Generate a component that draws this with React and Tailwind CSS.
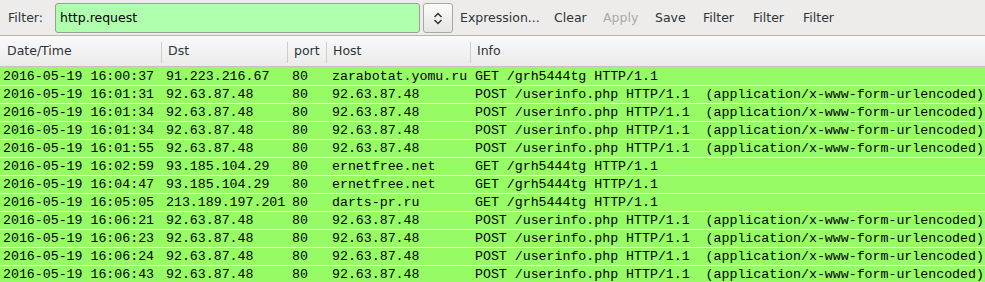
import React from 'react';

const rows = [
  ['2016-05-19 16:00:37', '91.223.216.67', '80', 'zarabotat.yomu.ru', 'GET /grh5444tg HTTP/1.1'],
  ['2016-05-19 16:01:31', '92.63.87.48', '80', '92.63.87.48', 'POST /userinfo.php HTTP/1.1  (application/x-www-form-urlencoded)'],
  ['2016-05-19 16:01:34', '92.63.87.48', '80', '92.63.87.48', 'POST /userinfo.php HTTP/1.1  (application/x-www-form-urlencoded)'],
  ['2016-05-19 16:01:34', '92.63.87.48', '80', '92.63.87.48', 'POST /userinfo.php HTTP/1.1  (application/x-www-form-urlencoded)'],
  ['2016-05-19 16:01:55', '92.63.87.48', '80', '92.63.87.48', 'POST /userinfo.php HTTP/1.1  (application/x-www-form-urlencoded)'],
  ['2016-05-19 16:02:59', '93.185.104.29', '80', 'ernetfree.net', 'GET /grh5444tg HTTP/1.1'],
  ['2016-05-19 16:04:47', '93.185.104.29', '80', 'ernetfree.net', 'GET /grh5444tg HTTP/1.1'],
  ['2016-05-19 16:05:05', '213.189.197.201', '80', 'darts-pr.ru', 'GET /grh5444tg HTTP/1.1'],
  ['2016-05-19 16:06:21', '92.63.87.48', '80', '92.63.87.48', 'POST /userinfo.php HTTP/1.1  (application/x-www-form-urlencoded)'],
  ['2016-05-19 16:06:23', '92.63.87.48', '80', '92.63.87.48', 'POST /userinfo.php HTTP/1.1  (application/x-www-form-urlencoded)'],
  ['2016-05-19 16:06:24', '92.63.87.48', '80', '92.63.87.48', 'POST /userinfo.php HTTP/1.1  (application/x-www-form-urlencoded)'],
  ['2016-05-19 16:06:43', '92.63.87.48', '80', '92.63.87.48', 'POST /userinfo.php HTTP/1.1  (application/x-www-form-urlencoded)'],
];

const cols = 'grid grid-cols-[161px_126px_39px_144px_1fr]';

const ToolButton = ({ label, w, disabled }) => (
  <span className={`${w} shrink-0 ${disabled ? 'text-[#a9a9a6]' : 'text-[#2e3436]'}`}>{label}</span>
);

const HeaderCell = ({ label, first }) => (
  <div className={`flex items-center h-full pl-[7px] ${first ? '' : 'relative'}`}>
    {!first && <span className="absolute left-0 top-[6px] bottom-[3px] w-px bg-[#cfcecb]" />}
    <span>{label}</span>
  </div>
);

export default function App() {
  return (
    <div className="w-[985px] h-[282px] overflow-hidden bg-[#edeceb] font-['DejaVu_Sans',sans-serif] text-[12.5px] text-[#2e3436]">
      {/* Filter toolbar */}
      <div className="flex items-center h-[35px] pl-[8px] pt-[1px]">
        <span className="w-[47px] shrink-0">Filter:</span>
        <div className="w-[365px] h-[30px] flex items-center pl-[4px] bg-[#afffaf] border border-[#9c9c98] rounded-[3px] text-black">
          http.request
        </div>
        <button className="ml-[3px] w-[30px] h-[30px] flex items-center justify-center border border-[#a8a8a4] rounded-[3px] bg-gradient-to-b from-[#fbfbfa] to-[#e6e5e3]">
          <svg width="10" height="13" viewBox="0 0 10 13" fill="none" stroke="#2e3436" strokeWidth="1.5">
            <path d="M1.5 5 L5 1.5 L8.5 5" />
            <path d="M1.5 8 L5 11.5 L8.5 8" />
          </svg>
        </button>
        <div className="flex items-center ml-[7px]">
          <ToolButton label="Expression..." w="w-[94px]" />
          <ToolButton label="Clear" w="w-[49px]" />
          <ToolButton label="Apply" w="w-[52px]" disabled />
          <ToolButton label="Save" w="w-[48px]" />
          <ToolButton label="Filter" w="w-[50px]" />
          <ToolButton label="Filter" w="w-[50px]" />
          <ToolButton label="Filter" w="w-[50px]" />
        </div>
      </div>
      <div className="h-px bg-[#b6b5b1]" />

      {/* Column header */}
      <div className={`${cols} h-[31px] bg-gradient-to-b from-[#fafafa] to-[#ebebea] border-b border-[#c4c3bf]`}>
        <HeaderCell label="Date/Time" first />
        <HeaderCell label="Dst" />
        <HeaderCell label="port" />
        <HeaderCell label="Host" />
        <HeaderCell label="Info" />
      </div>

      {/* Packet rows */}
      <div className="font-['Liberation_Mono',monospace] text-[13.25px] text-black bg-[#97fb66]">
        {rows.map((r, i) => (
          <div
            key={i}
            className={`${cols} h-[18px] items-center leading-[17px] whitespace-pre ${i === 0 ? '' : 'border-t border-[#effde8]'}`}
          >
            <span className="pl-[3px] overflow-hidden">{r[0]}</span>
            <span className="pl-[5px] overflow-hidden">{r[1]}</span>
            <span className="pl-[5px] overflow-hidden">{r[2]}</span>
            <span className="pl-[6px] overflow-hidden">{r[3]}</span>
            <span className="pl-[5px] overflow-hidden">{r[4]}</span>
          </div>
        ))}
      </div>
    </div>
  );
}
